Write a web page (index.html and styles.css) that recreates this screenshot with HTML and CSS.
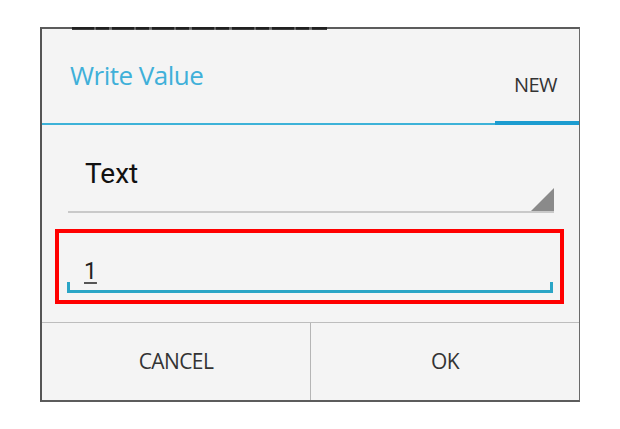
FILE: index.html
```html
<!DOCTYPE html>
<html>
<head>
<meta charset="utf-8">
<link rel="stylesheet" href="styles.css">
</head>
<body>
<div class="dialog">
  <div class="peek"></div>
  <div class="header">
    <div class="title">Write Value</div>
    <div class="tab">NEW</div>
  </div>
  <div class="spinner">
    <span class="spinner-text">Text</span>
    <span class="spinner-arrow"></span>
  </div>
  <div class="highlight">
    <div class="edit">
      <span class="edit-value">1</span>
    </div>
  </div>
  <div class="buttons">
    <div class="btn">CANCEL</div>
    <div class="btn">OK</div>
  </div>
</div>
</body>
</html>
```
FILE: styles.css
```css
html, body {
  margin: 0;
  padding: 0;
  background: #ffffff;
}
body {
  padding: 27px 0 0 40px;
  font-family: "Open Sans", "Noto Sans", sans-serif;
}
.dialog {
  position: relative;
  width: 537px;
  height: 371px;
  background: #f4f4f4;
  border-top: 2px solid #5c5c5c;
  border-left: 2px solid #555555;
  border-right: 1px solid #6a6a6a;
  border-bottom: 2px solid #5c5c5c;
  display: flex;
  flex-direction: column;
}
.peek {
  position: absolute;
  top: -2px;
  left: 30px;
  width: 255px;
  height: 3px;
  background: repeating-linear-gradient(90deg, #111 0 22px, #555 22px 24px, #111 24px 37px, #666 37px 40px);
  opacity: 0.8;
}
.header {
  height: 94px;
  border-bottom: 2px solid #3db2d8;
  display: flex;
  justify-content: space-between;
  position: relative;
}
.title {
  padding: 31px 0 0 28px;
  font-size: 26px;
  line-height: 30px;
  color: #3fb0d9;
  letter-spacing: -0.5px;
}
.tab {
  width: 84px;
  box-sizing: border-box;
  padding: 44px 0 0 19px;
  font-size: 20px;
  line-height: 24px;
  color: #333333;
  border-bottom: 4px solid #1c9cd0;
  margin-bottom: -2px;
  letter-spacing: -0.6px;
}
.spinner {
  margin: 0 25px 0 26px;
  height: 86px;
  border-bottom: 2px solid #c9c9c9;
  display: flex;
  justify-content: space-between;
  align-items: flex-end;
}
.spinner-text {
  font-family: Roboto, "Noto Sans", sans-serif;
  font-size: 28px;
  line-height: 34px;
  color: #111111;
  padding: 0 0 20px 17px;
}
.spinner-arrow {
  width: 0;
  height: 0;
  border-left: 23px solid transparent;
  border-bottom: 23px solid #8a8a8a;
}
.highlight {
  margin: 16px 15px 0 13px;
  height: 67px;
  border: 4px solid #ff0000;
  padding: 0 7px 0 8px;
  display: flex;
  align-items: flex-end;
}
.edit {
  flex: 1;
  height: 8px;
  border-left: 3px solid #2aa5c6;
  border-right: 3px solid #2aa5c6;
  border-bottom: 3px solid #2aa5c6;
  position: relative;
  margin-bottom: 7px;
}
.edit-value {
  position: absolute;
  left: 14px;
  bottom: 5px;
  font-family: Roboto, "Noto Sans", sans-serif;
  font-size: 23px;
  line-height: 27px;
  color: #222222;
  text-decoration: underline;
  text-decoration-color: #555555;
  text-underline-offset: 3px;
}
.buttons {
  margin-top: auto;
  height: 77px;
  border-top: 1px solid #bdbdbd;
  display: flex;
}
.btn {
  flex: 1;
  display: flex;
  align-items: center;
  justify-content: center;
  font-size: 21px;
  color: #333333;
  letter-spacing: -0.6px;
  padding-bottom: 2px;
}
.btn + .btn {
  border-left: 1px solid #b5b5b5;
}
```
